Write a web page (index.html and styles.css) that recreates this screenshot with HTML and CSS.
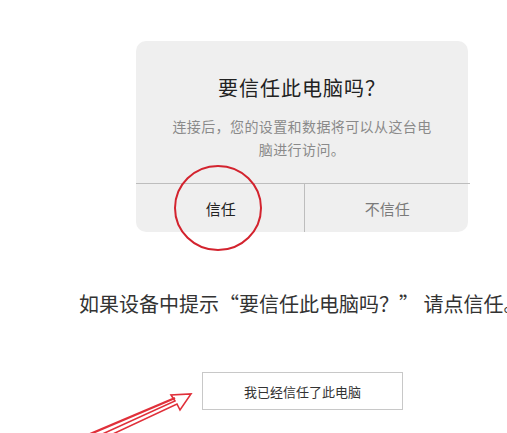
FILE: index.html
```html
<!DOCTYPE html>
<html lang="zh-CN">
<head>
    <meta charset="UTF-8">
    <meta name="viewport" content="width=device-width, initial-scale=1.0">
    <title>信任此电脑</title>
    <link rel="stylesheet" href="styles.css">
</head>
<body>

    <div class="page">
        <div class="dialog">
            <div class="dialog-body">
                <h1 class="dialog-title">要信任此电脑吗？</h1>
                <p class="dialog-desc">连接后，您的设置和数据将可以从这台电<br>脑进行访问。</p>
            </div>
            <div class="dialog-actions">
                <div class="action action-trust">信任</div>
                <div class="action action-deny">不信任</div>
            </div>
        </div>

        <p class="tip">如果设备中提示“要信任此电脑吗？” 请点信任。</p>

        <div class="confirm">我已经信任了此电脑</div>

        <!-- 红色标注：圆圈 + 箭头 -->
        <svg class="marks" width="507" height="433" viewBox="0 0 507 433">
            <ellipse cx="218" cy="208" rx="43" ry="42" fill="none" stroke="#d3232e" stroke-width="2"/>
            <path d="M98 436 L175 401 L171 395 L191 394 L180 410 L177 404 L100 440"
                  fill="none" stroke="#e0303a" stroke-width="1.6" stroke-linejoin="miter"/>
            <path d="M90 434 L175 398" stroke="#e0303a" stroke-width="2.4"/>
        </svg>
    </div>

</body>
</html>
```

FILE: styles.css
```css
body {
    margin: 0;
    background-color: #fff;
    font-family: "Noto Sans CJK SC", "Noto Sans", sans-serif;
    color: #333;
    overflow: hidden;
}

.page {
    position: relative;
    width: 507px;
    height: 433px;
    padding-top: 41px;
    box-sizing: border-box;
}

.dialog {
    width: 332px;
    height: 191px;
    margin-left: 136px;
    background-color: #efefef;
    border-radius: 10px;
    display: flex;
    flex-direction: column;
}

.dialog-body {
    flex: 1;
    text-align: center;
    padding-top: 34px;
}

.dialog-title {
    margin: 0;
    font-size: 20px;
    font-weight: normal;
    line-height: 26px;
    letter-spacing: 1px;
    color: #222;
}

.dialog-desc {
    margin: 14px 0 0;
    font-size: 14px;
    line-height: 23px;
    letter-spacing: 0.4px;
    color: #8a8a8a;
}

.dialog-actions {
    height: 48px;
    display: flex;
    border-top: 1px solid #bdbdbd;
    margin-right: -2px; /* 线比卡片略长 */
}

.action {
    flex: 1;
    display: flex;
    justify-content: center;
    align-items: center;
    font-size: 15px;
}

.action-trust {
    color: #222;
    border-right: 1px solid #bdbdbd;
    margin-left: 2px;
}

.action-deny {
    color: #7a7a7a;
}

.tip {
    margin: 58px 0 0 79px;
    font-size: 20px;
    line-height: 28px;
    color: #333;
    white-space: nowrap;
}

.confirm {
    width: 199px;
    height: 36px;
    margin: 54px 0 0 202px;
    border: 1px solid #c8c8c8;
    display: flex;
    justify-content: center;
    align-items: center;
    font-size: 13px;
    color: #333;
}

.marks {
    position: absolute;
    top: 0;
    left: 0;
    pointer-events: none;
}
```
